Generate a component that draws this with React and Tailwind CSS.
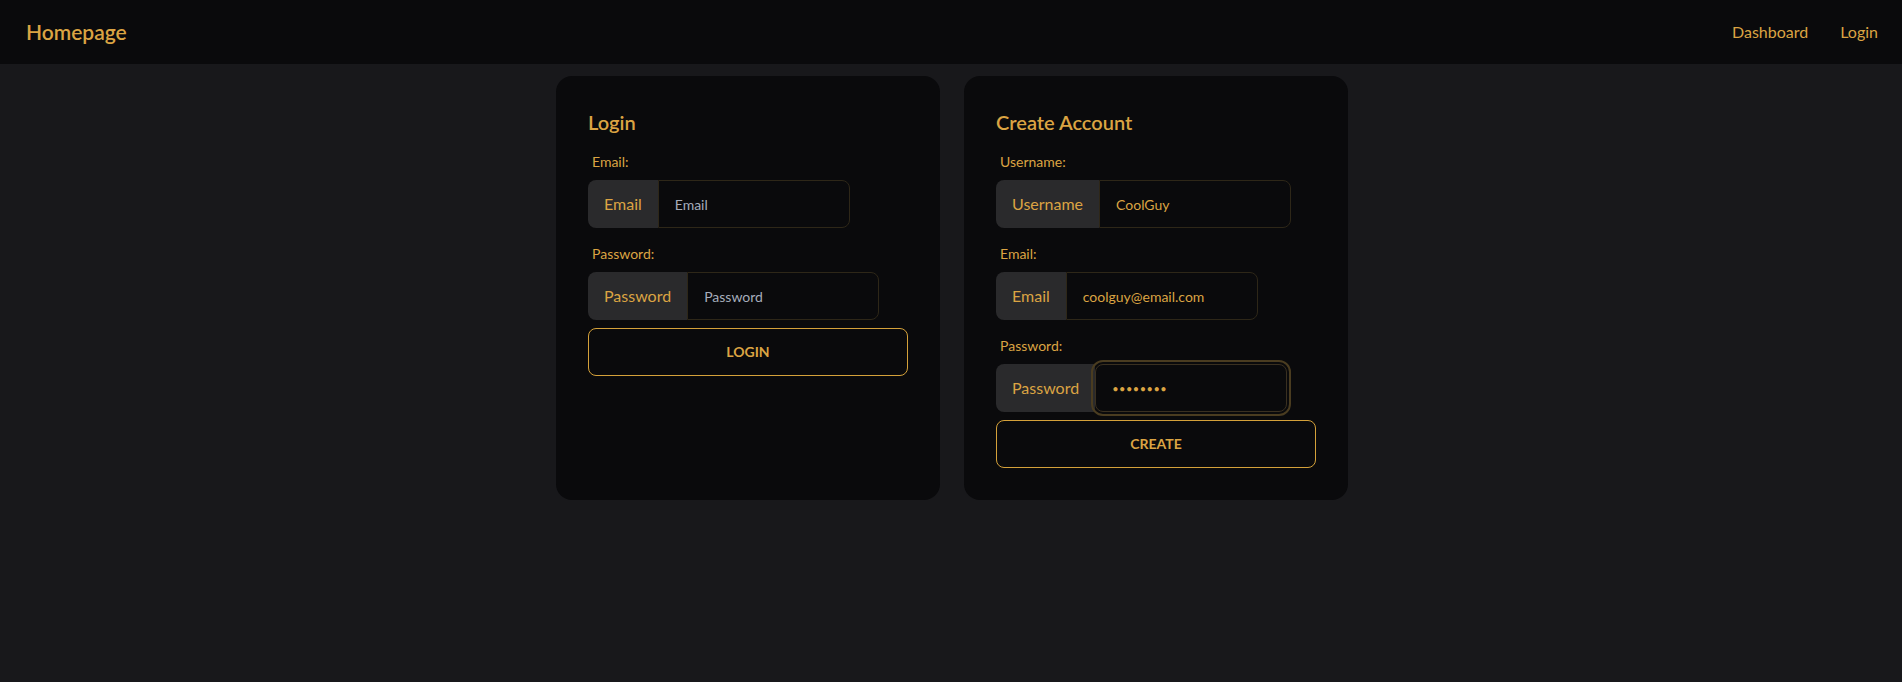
import React from "react";

const gold = "text-[#dba443]";

function Field({ label, tag, placeholder, value, type = "text", focused }) {
	return (
		<>
			<label className={`block px-1 py-2 text-sm leading-5 ${gold}`}>{label}</label>
			<div className="flex h-12 w-fit">
				<span className={`flex items-center px-4 rounded-l-lg bg-[#2a2a2c] text-base ${gold}`}>{tag}</span>
				<input
					type={type}
					readOnly
					value={value}
					placeholder={placeholder}
					className={
						focused
							? "h-12 w-48 px-4 text-[11px] tracking-[0.5px] bg-[#0a0a0c] border border-[#3a3020] rounded-lg outline-2 outline-offset-2 outline-[#4a3c20] text-[#dba443]"
							: "h-12 w-48 px-4 text-sm bg-[#0a0a0c] border border-[#2e2718] rounded-r-lg outline-none text-[#dba443] placeholder:text-[#a6adbb]"
					}
				/>
			</div>
		</>
	);
}

export default function App() {
	return (
		<div className="min-h-screen bg-[#18181b]" style={{ fontFamily: "Lato, 'Noto Sans', sans-serif" }}>
			{/* Navbar */}
			<nav className="h-16 bg-[#0a0a0c] flex items-center justify-between px-2">
				<a href="#" className={`pl-[18px] pr-4 text-[21px] font-semibold ${gold}`}>Homepage</a>
				<ul className="flex items-center">
					<li><a href="#" className={`block px-4 py-2 text-base ${gold}`}>Dashboard</a></li>
					<li><a href="#" className={`block px-4 py-2 text-base ${gold}`}>Login</a></li>
				</ul>
			</nav>

			<main className="flex justify-center gap-6 pt-3 pl-0.5">
				{/* Login */}
				<div className="w-96 rounded-2xl bg-[#0a0a0c] p-8 flex flex-col gap-2">
					<h2 className={`text-xl leading-7 font-semibold ${gold}`}>Login</h2>
					<div className="flex flex-col">
						<Field label="Email:" tag="Email" placeholder="Email" value="" />
					</div>
					<div className="flex flex-col">
						<Field label="Password:" tag="Password" placeholder="Password" value="" type="password" />
					</div>
					<button className={`h-12 w-full rounded-lg border border-[#d4a13a] text-sm font-bold uppercase ${gold}`}>Login</button>
				</div>

				{/* Create Account */}
				<div className="w-96 rounded-2xl bg-[#0a0a0c] p-8 flex flex-col gap-2">
					<h2 className={`text-xl leading-7 font-semibold ${gold}`}>Create Account</h2>
					<div className="flex flex-col">
						<Field label="Username:" tag="Username" placeholder="Username" value="CoolGuy" />
					</div>
					<div className="flex flex-col">
						<Field label="Email:" tag="Email" placeholder="Email" value="coolguy@email.com" />
					</div>
					<div className="flex flex-col">
						<Field label="Password:" tag="Password" placeholder="Password" value="password" type="password" focused />
					</div>
					<button className={`h-12 w-full rounded-lg border border-[#d4a13a] text-sm font-bold uppercase ${gold}`}>Create</button>
				</div>
			</main>
		</div>
	);
}
